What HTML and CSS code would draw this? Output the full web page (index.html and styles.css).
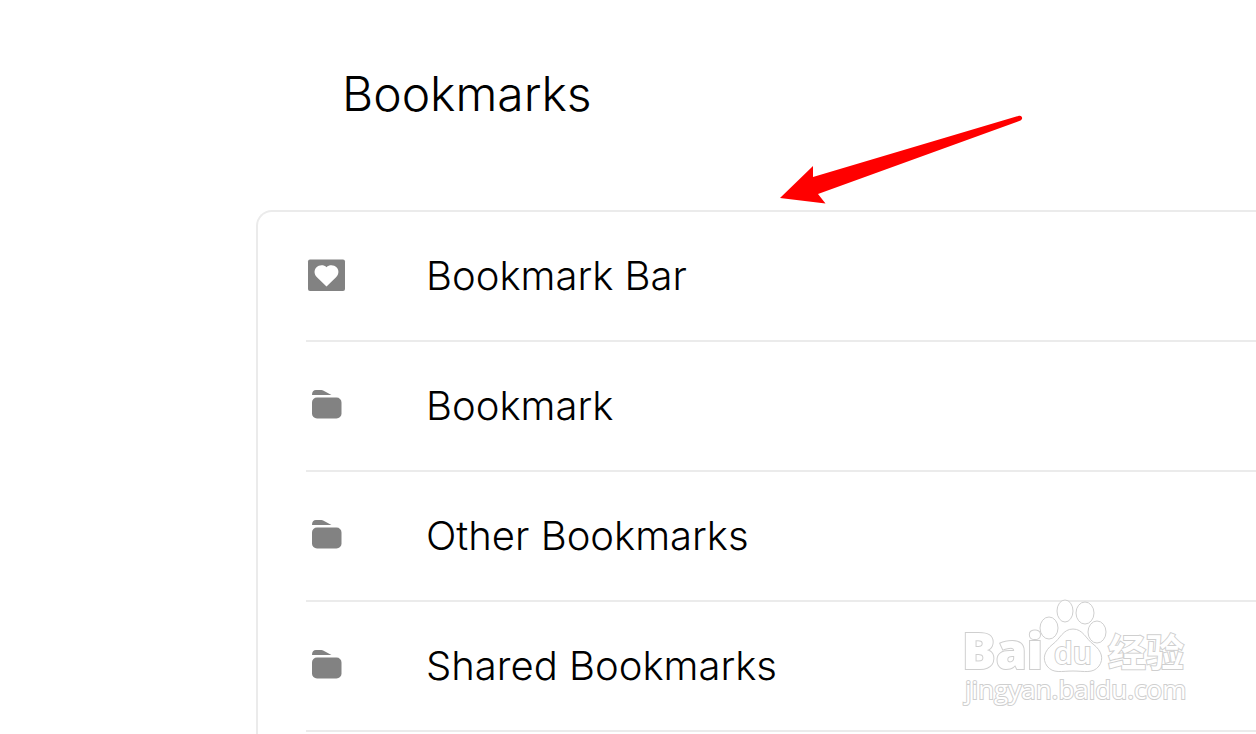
FILE: index.html
```html
<!DOCTYPE html>
<html lang="en">
<head>
  <meta charset="UTF-8">
  <meta name="viewport" content="width=device-width, initial-scale=1">
  <title>Bookmarks</title>
  <link rel="stylesheet" href="styles.css">
</head>
<body>
  <svg class="symbols" aria-hidden="true">
    <symbol id="icon-heart" viewBox="0 0 40 40">
      <rect x="2" y="3.500" width="37" height="31.500" rx="2" fill="#828282"/>
      <path d="M20.500 30.500 L11.200 21.500 C7.800 18.300 7.900 14 10.300 11.500 C13.200 8.500 18 8.700 20.500 11.200 C23 8.700 27.800 8.500 30.700 11.500 C33.100 14 33.200 18.300 29.800 21.500 Z" fill="#fff"/>
    </symbol>
    <symbol id="icon-folder" viewBox="0 0 40 40">
      <path d="M6 9 C6 5.500 7.500 4 10 4 H14 C16 4 17 4.300 19 5.500 L25.500 9 Z" fill="#828282"/>
      <rect x="6" y="11.500" width="29.500" height="21" rx="5" fill="#828282"/>
    </symbol>
  </svg>

  <main class="page">
    <h1 class="title">Bookmarks</h1>
    <ul class="list">
      <li class="item">
        <a class="link" href="#bookmark-bar">
          <svg class="icon" aria-hidden="true"><use href="#icon-heart"/></svg>
          <span>Bookmark Bar</span>
        </a>
      </li>
      <li class="item">
        <a class="link" href="#bookmark">
          <svg class="icon" aria-hidden="true"><use href="#icon-folder"/></svg>
          <span>Bookmark</span>
        </a>
      </li>
      <li class="item">
        <a class="link" href="#other">
          <svg class="icon" aria-hidden="true"><use href="#icon-folder"/></svg>
          <span>Other Bookmarks</span>
        </a>
      </li>
      <li class="item">
        <a class="link" href="#shared">
          <svg class="icon" aria-hidden="true"><use href="#icon-folder"/></svg>
          <span>Shared Bookmarks</span>
        </a>
      </li>
    </ul>
  </main>

  <svg class="arrow" viewBox="0 0 250 100" aria-hidden="true">
    <path d="M0 93 L33 61 V72 L239 10.800 C242 10 243.500 14 240.500 15.500 L38 89 L45.500 98.500 Z" fill="#f00"/>
  </svg>

  <svg class="watermark" viewBox="0 0 250 130">
    <text class="wm-name" x="12" y="79">Bai</text>
    <g class="wm-paw">
      <ellipse cx="99" cy="38" rx="9" ry="11"/>
      <ellipse cx="115" cy="21" rx="8" ry="11"/>
      <ellipse cx="135" cy="23" rx="9" ry="11"/>
      <ellipse cx="147" cy="42" rx="9" ry="11"/>
      <path d="M123 39 C133 39 136 49 143 54 C152 61 154 69 149 76 C143 84 134 81 123 81 C112 81 103 84 97 76 C92 69 94 61 103 54 C110 49 113 39 123 39 Z"/>
    </g>
    <text class="wm-du" x="104" y="74">du</text>
    <text class="wm-cn" x="158" y="76">经验</text>
    <text class="wm-url" x="15" y="109">jingyan.baidu.com</text>
  </svg>
</body>
</html>
```
FILE: styles.css
```css
* {
  box-sizing: border-box;
}
body {
  margin: 0;
  background: #fff;
  color: #000;
  font-family: Inter, "Liberation Sans", sans-serif;
  font-weight: 350;
  overflow: hidden;
}
.symbols {
  display: none;
}
.page {
  display: flex;
  flex-direction: column;
  min-height: 100vh;
  padding-left: 256px;
}
.title {
  margin: 0;
  padding: 64px 0 86px 86px;
  font-size: 48px;
  line-height: 60px;
  font-weight: 350;
}
.list {
  flex: 1;
  margin: 0;
  padding: 0 0 0 48px;
  list-style: none;
  border: 2px solid #ebebeb;
  border-width: 2px 0 0 2px;
  border-radius: 16px 0 0 0;
}
.item {
  border-bottom: 2px solid #ebebeb;
}
.link {
  display: flex;
  align-items: center;
  gap: 80px;
  height: 128px;
  color: inherit;
  font-size: 40px;
  line-height: 48px;
  text-decoration: none;
}
.icon {
  width: 40px;
  height: 40px;
}
.arrow {
  position: absolute;
  top: 105px;
  left: 780px;
  width: 250px;
  height: 100px;
}
.watermark {
  position: absolute;
  top: 590px;
  left: 950px;
  width: 250px;
  height: 130px;
  fill: #fff;
  stroke: #cfcfcf;
  stroke-width: 2px;
}
.watermark text {
  paint-order: stroke;
}
.wm-paw {
  stroke-width: 1px;
}
.wm-name {
  font-family: "Open Sans", sans-serif;
  font-size: 50px;
  font-weight: 800;
}
.wm-du {
  font-family: "Open Sans", sans-serif;
  font-size: 30px;
  font-weight: 600;
}
.wm-cn {
  font-family: "Noto Sans CJK SC", sans-serif;
  font-size: 38px;
  font-weight: 700;
}
.wm-url {
  font-family: "Open Sans", sans-serif;
  font-size: 26px;
  font-weight: 400;
}
```
